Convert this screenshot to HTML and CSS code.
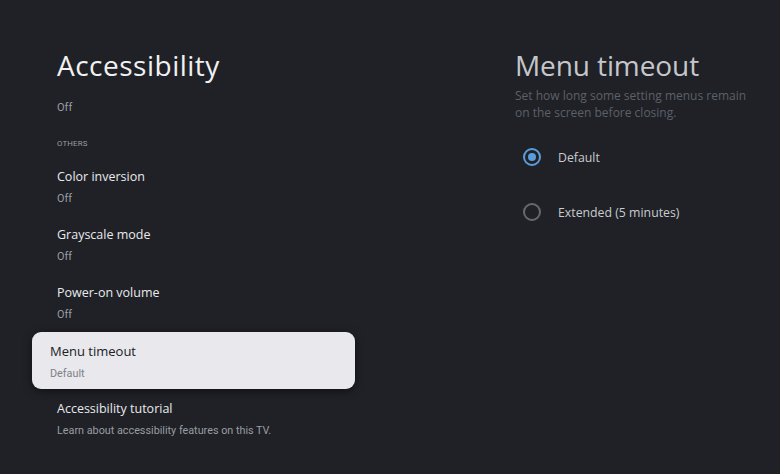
FILE: index.html
```html
<!DOCTYPE html>
<html lang="en">
<head>
<meta charset="utf-8">
<title>Accessibility</title>
<link rel="stylesheet" href="styles.css">
</head>
<body>
<div class="screen">
  <section class="left">
    <h1 class="page-title">Accessibility</h1>
    <div class="top-value">Off</div>
    <div class="section-label">OTHERS</div>
    <ul class="items">
      <li class="item"><div class="item-title">Color inversion</div><div class="item-sub">Off</div></li>
      <li class="item"><div class="item-title">Grayscale mode</div><div class="item-sub">Off</div></li>
      <li class="item"><div class="item-title">Power-on volume</div><div class="item-sub">Off</div></li>
      <li class="item focused"><div class="item-title">Menu timeout</div><div class="item-sub">Default</div></li>
      <li class="item"><div class="item-title">Accessibility tutorial</div><div class="item-sub">Learn about accessibility features on this TV.</div></li>
    </ul>
  </section>
  <section class="right">
    <h2 class="panel-title">Menu timeout</h2>
    <p class="panel-desc">Set how long some setting menus remain on the screen before closing.</p>
    <div class="options">
      <div class="option"><span class="radio checked"></span><span class="option-label">Default</span></div>
      <div class="option"><span class="radio"></span><span class="option-label">Extended (5 minutes)</span></div>
    </div>
  </section>
</div>
</body>
</html>
```
FILE: styles.css
```css
html, body {
  margin: 0;
  padding: 0;
  background: #1f2127;
}
.screen {
  width: 780px;
  height: 474px;
  display: flex;
  background: #1f2127;
  overflow: hidden;
  font-family: Roboto, "Liberation Sans", sans-serif;
}
.left {
  width: 355px;
  padding-left: 32px;
  padding-top: 47px;
  box-sizing: border-box;
}
.page-title {
  margin: 0 0 0 25px;
  font-family: "Open Sans", sans-serif;
  font-weight: 400;
  font-size: 28px;
  line-height: 36px;
  color: #f1f1f2;
  letter-spacing: 0.5px;
}
.top-value {
  margin: 17px 0 0 25px;
  font-size: 11px;
  line-height: 16px;
  color: #9a9da2;
}
.section-label {
  margin: 22px 0 0 25px;
  font-size: 7.8px;
  line-height: 12px;
  color: #9a9da2;
  letter-spacing: 0.2px;
}
.items {
  list-style: none;
  margin: 8px 0 0 0;
  padding: 0;
  display: flex;
  flex-direction: column;
  gap: 1px;
}
.item {
  height: 57px;
  box-sizing: border-box;
  padding: 10px 0 0 25px;
  border-radius: 9px;
}
.item-title {
  font-family: "Open Sans", sans-serif;
  font-size: 12.5px;
  line-height: 18px;
  color: #e9eaec;
}
.item-sub {
  margin-top: 5px;
  font-size: 10.8px;
  line-height: 16px;
  color: #9a9da2;
}
.item.focused {
  background: #e8e8ed;
  padding-left: 18px;
  box-shadow: 0 2px 8px rgba(0, 0, 0, 0.5);
}
.item.focused .item-title {
  color: #202124;
  font-size: 13px;
}
.item.focused .item-sub {
  margin-top: 6px;
  color: #7d8187;
}
.right {
  flex: 1;
  padding-left: 160px;
  padding-top: 47px;
}
.panel-title {
  margin: 0;
  font-family: "Open Sans", sans-serif;
  font-weight: 400;
  font-size: 28px;
  line-height: 36px;
  color: #c5c7cb;
  letter-spacing: -0.1px;
}
.panel-desc {
  margin: 4px 0 0 0;
  width: 240px;
  font-family: "Open Sans", sans-serif;
  font-size: 12px;
  line-height: 17px;
  color: #5c6068;
}
.options {
  margin-top: 27px;
  display: flex;
  flex-direction: column;
  gap: 37px;
}
.option {
  display: flex;
  align-items: center;
  height: 18px;
  padding-left: 8px;
}
.radio {
  width: 14px;
  height: 14px;
  border: 2px solid #66696f;
  border-radius: 50%;
  box-sizing: content-box;
  display: flex;
  align-items: center;
  justify-content: center;
}
.radio.checked {
  border-color: #5b9ddc;
}
.radio.checked::after {
  content: "";
  width: 8px;
  height: 8px;
  border-radius: 50%;
  background: #5b9ddc;
}
.option-label {
  margin-left: 17px;
  font-family: "Open Sans", sans-serif;
  font-size: 12.3px;
  color: #c9cbce;
}
```
